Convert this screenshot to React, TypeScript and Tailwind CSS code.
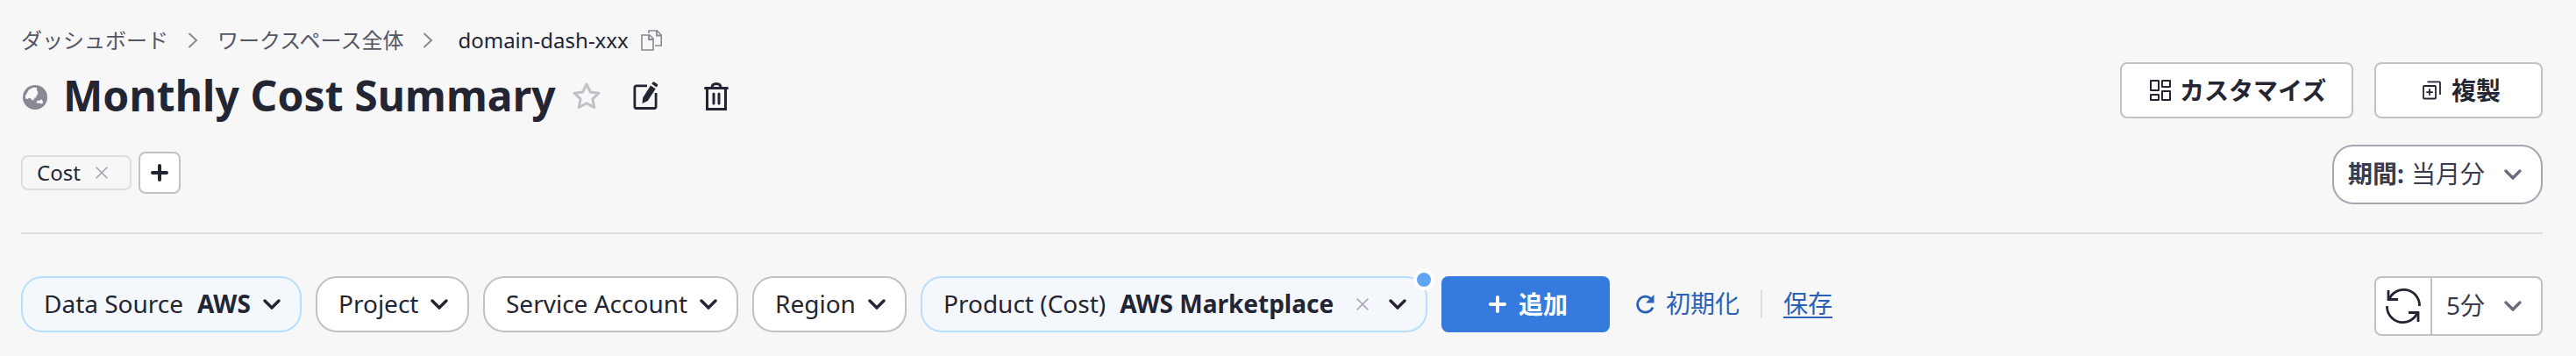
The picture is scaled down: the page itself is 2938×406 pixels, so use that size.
import type { ReactNode } from "react";

function ChevronDown({ className }: { className: string }) {
  return (
    <svg className={className} viewBox="0 0 20 12" fill="none" stroke="currentColor" strokeWidth="3.4" strokeLinecap="round" strokeLinejoin="miter">
      <path d="M2 2l8 8 8-8" />
    </svg>
  );
}

function Separator({ className }: { className: string }) {
  return (
    <svg className={className} viewBox="0 0 12 18" fill="none" stroke="#898995" strokeWidth="2">
      <path d="M1.500 1l8.500 8-8.500 8" />
    </svg>
  );
}

function Cross({ className }: { className: string }) {
  return (
    <svg className={className} viewBox="0 0 14 14" fill="none" stroke="#a9a9b3" strokeWidth="1.6">
      <path d="M.6.6l12.800 12.800M13.400.6L.6 13.400" />
    </svg>
  );
}

function Plus({ className }: { className: string }) {
  return (
    <svg className={className} viewBox="0 0 20 20" fill="none" stroke="currentColor" strokeWidth="4" strokeLinecap="round">
      <path d="M10 2v16M2 10h16" />
    </svg>
  );
}

function Pill({ label, value, active, className, children }: { label: string; value?: string; active?: boolean; className: string; children?: ReactNode }) {
  return (
    <div
      className={`relative flex h-16 shrink-0 items-center rounded-3xl border-2 pl-6 text-[28px] leading-10 whitespace-nowrap ${active ? "border-[#b8deff] bg-[#f4f7fc]" : "border-[#c1c1c8] bg-white"} ${className}`}
    >
      <span className="pb-0.5">{label}</span>
      {value && <span className="ml-4 pb-0.5 font-bold">{value}</span>}
      {children}
    </div>
  );
}

export default function App() {
  return (
    <div className="h-[406px] w-[2938px] overflow-hidden bg-[#f7f7f7] pr-[38px] pl-6 font-['Noto_Sans','Noto_Sans_CJK_JP',sans-serif] text-[#232533]">
      <header className="flex h-[267px] justify-between border-b-2 border-[#dddddf]">
        <div className="flex flex-col">
          <nav className="mt-[26px] flex h-10 items-center text-2xl leading-10">
            <span className="text-[#545566]">ダッシュボード</span>
            <Separator className="mr-[22px] ml-[22px] h-[18px] w-3" />
            <span className="text-[#545566]">ワークスペース全体</span>
            <Separator className="mr-7 ml-[22px] h-[18px] w-3" />
            <span>domain-dash-xxx</span>
            <svg className="ml-[14px] size-6" viewBox="0 0 24 24" fill="none" stroke="#898995" strokeWidth="1.6">
              <path d="M1 6h9l4 4v13H1z" />
              <path d="M9 4V1h9.500l4.700 5v12H16" />
              <path d="M9 6v5h5M18 1v5.500h5" strokeWidth="1.8" />
            </svg>
          </nav>

          <div className="mt-[14px] flex h-[60px] items-center">
            <svg className="mt-0.5 ml-0.5 size-7" viewBox="0 0 28 28">
              <circle cx="14" cy="14" r="14" fill="#898995" />
              <path
                d="M3 15.300V12l4-6.700 5-2.600 4.300.3L16 6l1.300 2-.6 2.700-1.400 2v2l-1.600-.7-1 3-2.400.3L9 15.300l-2-.6L5.300 16z"
                fill="#f7f7f7"
              />
              <path d="M15.700 18.700l2-1.400 1.300.7 2-2 2 2.700-.3 2.600h-2.400l-2-1-2.300.7z" fill="#f7f7f7" />
            </svg>
            <h1 className="ml-[18px] pb-[3px] text-[48px] leading-[60px] font-bold tracking-[0.1px] whitespace-nowrap">Monthly Cost Summary</h1>
            <svg className="ml-[17px] size-9" viewBox="0 0 36 36" fill="none" stroke="#c1c1c8" strokeWidth="3" strokeLinejoin="round">
              <path d="M18 4l4.300 9 9.700 1.200-7.100 6.700 1.900 9.600-8.800-4.800-8.800 4.800 1.900-9.600L4 14.200 13.700 13z" />
            </svg>
            <svg className="mb-0.5 ml-[34px] size-8" viewBox="0 0 32 32" fill="none" stroke="#232533" strokeWidth="2.800">
              <path d="M17 4.800H4.900a2 2 0 0 0-2 2v21.700a2 2 0 0 0 2 2h20.200a2 2 0 0 0 2-2V13" />
              <path d="M11.500 25l.700-6.500L21 4.600l5.800 3.600L17.800 22z" fill="#232533" stroke="none" />
              <path d="M22.300 2.700L23.500.8q.6-.8 1.600-.2l3.500 2.200q1 .7.500 1.600l-1.200 2z" fill="#232533" stroke="none" />
            </svg>
            <svg className="ml-12 size-8" viewBox="0 0 32 32" fill="none" stroke="#232533" strokeWidth="3" strokeLinecap="round">
              <path d="M3.500 6.500h25M5.500 7v23.500h21V7M11 6c0-3 2-4.500 5-4.500S21 3 21 6M13 13v11M19 13v11" />
            </svg>
          </div>

          <div className="mt-[33px] flex h-12 items-center">
            <div className="flex h-10 w-[126px] items-center rounded-lg border-2 border-[#dddddf] pl-4 text-2xl leading-9">
              <span>Cost</span>
              <Cross className="ml-[17px] size-[14px]" />
            </div>
            <button className="ml-2 flex size-12 items-center justify-center rounded-lg border-2 border-[#c1c1c8] bg-white">
              <Plus className="size-5" />
            </button>
          </div>
        </div>

        <div className="flex flex-col items-end">
          <div className="mt-[71px] flex gap-6 text-[28px] leading-10 font-bold">
            <button className="flex h-16 w-[266px] items-center rounded-lg border-2 border-[#c1c1c8] bg-white pl-8">
              <svg className="size-6" viewBox="0 0 24 24" fill="none" stroke="#232533" strokeWidth="2" strokeLinejoin="round">
                <path d="M1 1h9v11H1zM14 1h9v7h-9zM1 17h9v6H1zM14 13h9v10h-9z" />
              </svg>
              <span className="ml-[10px]">カスタマイズ</span>
            </button>
            <button className="flex h-16 w-48 items-center rounded-lg border-2 border-[#c1c1c8] bg-white pl-[53px]">
              <svg className="size-[22px]" viewBox="0 0 22 22" fill="none" stroke="#232533" strokeWidth="1.800">
                <rect x="1" y="6" width="14" height="14.500" rx="1" />
                <path d="M5.500 1.400h13.500a1 1 0 0 1 1 1V16M8 9.300v7.500M4.300 13.100h7.500" />
              </svg>
              <span className="ml-[11px]">複製</span>
            </button>
          </div>
          <div className="mt-[30px] flex h-[68px] w-60 items-center rounded-3xl border-2 border-[#a5a7b1] bg-white pl-4 text-[28px] leading-10 text-[#3b3b4e]">
            <span className="pb-0.5 font-bold">期間:</span>
            <span className="ml-2 pb-0.5">当月分</span>
            <ChevronDown className="mr-[22px] ml-auto h-3 w-5 text-[#6b6b7b]" />
          </div>
        </div>
      </header>

      <section className="mt-12 flex items-start">
        <div className="flex h-16 items-center gap-4">
          <Pill label="Data Source" value="AWS" active className="w-80">
            <ChevronDown className="mr-[22px] ml-auto h-3 w-5" />
          </Pill>
          <Pill label="Project" className="w-[175px]">
            <ChevronDown className="mr-[22px] ml-auto h-3 w-5" />
          </Pill>
          <Pill label="Service Account" className="w-[291px]">
            <ChevronDown className="mr-[22px] ml-auto h-3 w-5" />
          </Pill>
          <Pill label="Region" className="w-[176px]">
            <ChevronDown className="mr-[22px] ml-auto h-3 w-5" />
          </Pill>
          <Pill label="Product (Cost)" value="AWS Marketplace" active className="w-[578px]">
            <Cross className="mr-[23px] ml-auto size-[14px]" />
            <ChevronDown className="mr-[22px] h-3 w-5" />
            <span className="absolute -top-[10px] -right-[10px] size-6 rounded-full border-4 border-white bg-[#60a5f5]" />
          </Pill>
          <button className="flex h-16 w-48 items-center rounded-lg bg-[#357bde] pl-[54px] text-[28px] leading-10 font-bold text-white">
            <Plus className="size-5" />
            <span className="ml-[14px]">追加</span>
          </button>
        </div>
        <div className="flex h-16 items-center text-[28px] leading-10 text-[#2a61b7]">
          <svg className="ml-[29px] size-[22px]" viewBox="0 0 22 22" fill="none" stroke="currentColor" strokeWidth="2.800">
            <path d="M20 14.500A9 9 0 1 1 18 4.800" />
            <path d="M21.500 0v9.500H12z" fill="currentColor" stroke="none" />
          </svg>
          <span className="ml-[13px] pb-0.5">初期化</span>
          <span className="ml-6 h-8 w-0.5 bg-[#dddddf]" />
          <span className="ml-6 h-8 border-b-2 border-[#2a61b7] leading-[30px]">保存</span>
        </div>
        <div className="ml-auto flex h-[68px] w-48 items-center rounded-lg border-2 border-[#c1c1c8] bg-white text-[28px] leading-10 text-[#3b3b4e]">
          <div className="flex h-full w-16 items-center justify-center border-r-2 border-[#c1c1c8]">
            <svg className="size-10" viewBox="0 0 40 40" fill="none" stroke="#232533" strokeWidth="2.800">
              <path d="M3.500 13.500A18 18 0 0 1 38.500 20M1.500 20A18 18 0 0 0 36.500 26.500" />
              <path d="M3 2v10.500h11M37 38V27.500H26" />
            </svg>
          </div>
          <span className="ml-4 pb-0.5">5分</span>
          <ChevronDown className="mr-[22px] ml-auto h-3 w-5 text-[#6b6b7b]" />
        </div>
      </section>
    </div>
  );
}
